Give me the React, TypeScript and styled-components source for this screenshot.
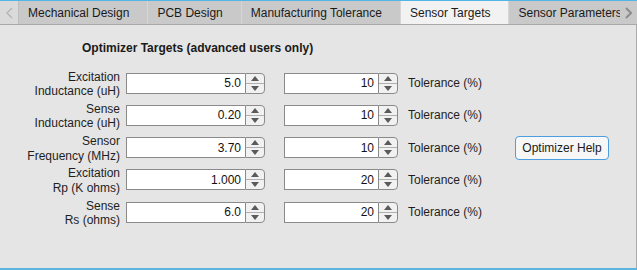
import styled, { createGlobalStyle } from 'styled-components'

const GlobalStyle = createGlobalStyle`
    html, body {
        margin: 0;
        padding: 0;
        background: #ffffff;
    }
    body {
        font-family: "Liberation Sans", Arial, sans-serif;
        font-size: 12px;
        color: #1e1e1e;
    }
`

interface TargetRow {
    label: string[]
    value: string
    tolerance: string
}

const rows: TargetRow[] = [
    { label: ['Excitation', 'Inductance (uH)'], value: '5.0', tolerance: '10' },
    { label: ['Sense', 'Inductance (uH)'], value: '0.20', tolerance: '10' },
    { label: ['Sensor', 'Frequency (MHz)'], value: '3.70', tolerance: '10' },
    { label: ['Excitation', 'Rp (K ohms)'], value: '1.000', tolerance: '20' },
    { label: ['Sense', 'Rs (ohms)'], value: '6.0', tolerance: '20' },
]

const tabs = ['Mechanical Design', 'PCB Design', 'Manufacturing Tolerance', 'Sensor Targets', 'Sensor Parameters']

const Spinner = ({ value, width }: { value: string; width: number }) => (
    <SpinBox $width={width}>
        <SpinValue>{value}</SpinValue>
        <SpinButtons>
            <SpinArrow>
                <svg width="8" height="5" viewBox="0 0 8 5"><path d="M0 5 L4 0 L8 5 Z" fill="#5a5a5a" /></svg>
            </SpinArrow>
            <SpinArrow $bottom>
                <svg width="8" height="5" viewBox="0 0 8 5"><path d="M0 0 L4 5 L8 0 Z" fill="#5a5a5a" /></svg>
            </SpinArrow>
        </SpinButtons>
    </SpinBox>
)

const App = () => {
    return (
        <>
            <GlobalStyle />
            <Window>
                <TabBar>
                    <ScrollArrow $side="left">
                        <svg width="7" height="12" viewBox="0 0 7 12"><path d="M6 1 L1 6 L6 11" stroke="#b4b4b4" strokeWidth="1.4" fill="none" /></svg>
                    </ScrollArrow>
                    <TabStrip>
                        {tabs.map(t => (
                            <Tab key={t} $active={t === 'Sensor Targets'}>{t}</Tab>
                        ))}
                    </TabStrip>
                    <ScrollArrow $side="right">
                        <svg width="7" height="12" viewBox="0 0 7 12"><path d="M1 1 L6 6 L1 11" stroke="#8c8c8c" strokeWidth="2" fill="none" /></svg>
                    </ScrollArrow>
                </TabBar>
                <Panel>
                    <Title>Optimizer Targets (advanced users only)</Title>
                    {rows.map((r, i) => (
                        <Row key={i}>
                            <FieldLabel>
                                {r.label[0]}<br />{r.label[1]}
                            </FieldLabel>
                            <Spinner value={r.value} width={139} />
                            <Spinner value={r.tolerance} width={114} />
                            <TolLabel>Tolerance (%)</TolLabel>
                            {i === 2 && <HelpButton>Optimizer Help</HelpButton>}
                        </Row>
                    ))}
                </Panel>
            </Window>
        </>
    )
}

export default App

const Window = styled.div`
    width: 637px;
    height: 270px;
    box-sizing: border-box;
    border-top: 1px solid #55b4e6;
    border-bottom: 2px solid #5bb5de;
    display: flex;
    flex-direction: column;
    background: #e5e5e5;
`

const TabBar = styled.div`
    display: flex;
    height: 24px;
    box-sizing: border-box;
    border-bottom: 1px solid #a8a8a8;
    background: #c9c9c9;
`

const ScrollArrow = styled.div<{ $side: 'left' | 'right' }>`
    width: ${props => props.$side === 'left' ? '18px' : '17px'};
    flex-shrink: 0;
    display: flex;
    align-items: center;
    justify-content: center;
    background: ${props => props.$side === 'left' ? '#dadada' : '#c9c9c9'};
    border-right: ${props => props.$side === 'left' ? '1px solid #bdbdbd' : 'none'};
`

const TabStrip = styled.div`
    flex: 1;
    display: flex;
    overflow: hidden;
    min-width: 0;
`

const Tab = styled.div<{ $active?: boolean }>`
    flex-shrink: 0;
    padding: 0 18px 0 9px;
    display: flex;
    align-items: center;
    white-space: nowrap;
    color: #1a1a1a;
    background: ${props => props.$active ? '#f2f2f2' : '#c9c9c9'};
    border-right: 1px solid #d6d6d6;
    margin-bottom: ${props => props.$active ? '-1px' : '0'};
`

const Panel = styled.div`
    flex: 1;
    border-right: 1px solid #ababab;
    padding-top: 16px;
`

const Title = styled.div`
    font-weight: bold;
    line-height: 14px;
    padding-left: 82px;
    margin-bottom: 12px;
    color: #1a1a1a;
`

const Row = styled.div`
    display: grid;
    grid-template-columns: 126px 158px 124px 107px 94px;
    align-items: center;
    height: 32.25px;
`

const FieldLabel = styled.div`
    text-align: right;
    padding-right: 6px;
    line-height: 14.5px;
    margin-top: 2px;
    color: #1e1e1e;
`

const SpinBox = styled.div<{ $width: number }>`
    width: ${props => props.$width}px;
    height: 21px;
    display: flex;
    box-sizing: border-box;
`

const SpinValue = styled.div`
    flex: 1;
    background: #ffffff;
    border: 1px solid #8a8a8a;
    border-right: none;
    display: flex;
    align-items: center;
    justify-content: flex-end;
    padding-right: 4px;
    color: #111111;
`

const SpinButtons = styled.div`
    width: 20px;
    display: flex;
    flex-direction: column;
    border: 1px solid #8a8a8a;
    border-radius: 0 4px 4px 0;
    background: #f1f1f1;
    overflow: hidden;
    box-sizing: border-box;
`

const SpinArrow = styled.div<{ $bottom?: boolean }>`
    flex: 1;
    display: flex;
    align-items: center;
    justify-content: center;
    border-top: ${props => props.$bottom ? '1px solid #b0b0b0' : 'none'};
`

const TolLabel = styled.div`
    padding-left: 0;
    color: #1e1e1e;
`

const HelpButton = styled.button`
    width: 94px;
    height: 24px;
    padding: 0;
    font-family: "Liberation Sans", Arial, sans-serif;
    font-size: 12px;
    color: #1a1a1a;
    background: #f7f7f7;
    border: 1px solid #4b9fe0;
    border-radius: 4px;
`
